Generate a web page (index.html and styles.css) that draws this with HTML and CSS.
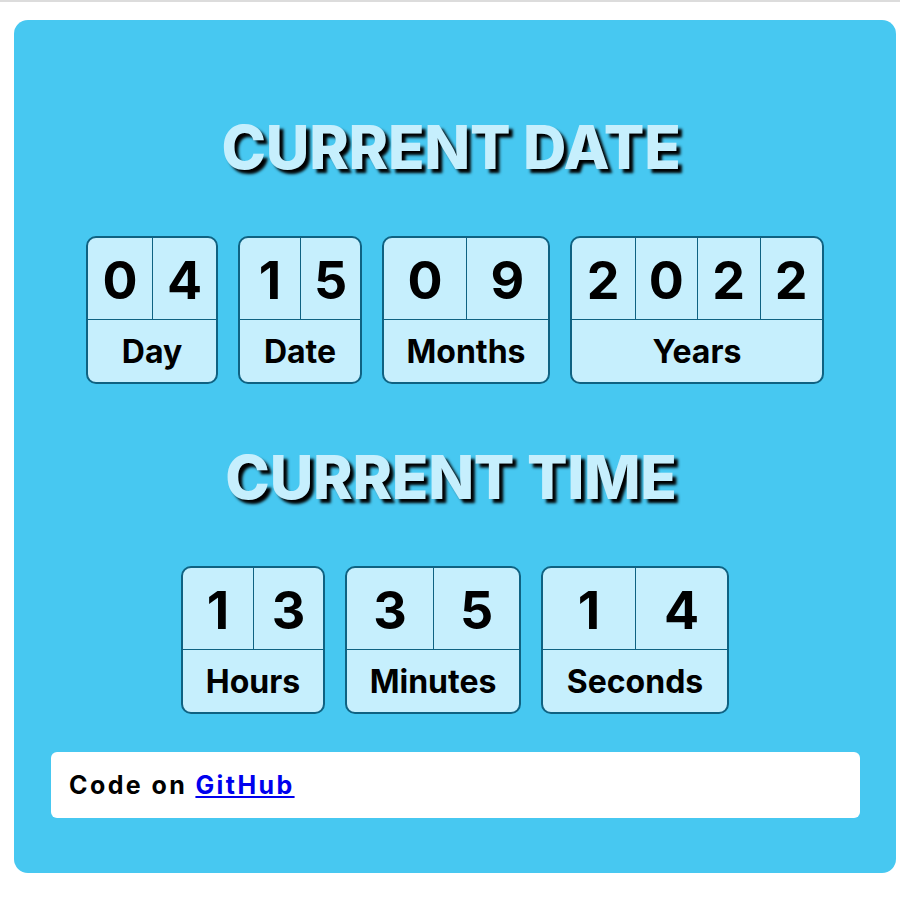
FILE: index.html
```html
<!DOCTYPE html>
<html lang="en">
<head>
<meta charset="utf-8">
<title>Current Date and Time</title>
<link rel="stylesheet" href="styles.css">
</head>
<body>
<div class="topline"></div>
<main class="card">
  <h1 class="title title-date">CURRENT DATE</h1>
  <div class="row">
    <div class="box w-day">
      <div class="digits"><span class="d">0</span><span class="d">4</span></div>
      <div class="label">Day</div>
    </div>
    <div class="box w-date">
      <div class="digits"><span class="d">1</span><span class="d">5</span></div>
      <div class="label">Date</div>
    </div>
    <div class="box w-months">
      <div class="digits"><span class="d">0</span><span class="d">9</span></div>
      <div class="label">Months</div>
    </div>
    <div class="box w-years">
      <div class="digits four"><span class="d">2</span><span class="d">0</span><span class="d">2</span><span class="d">2</span></div>
      <div class="label">Years</div>
    </div>
  </div>
  <h1 class="title title-time">CURRENT TIME</h1>
  <div class="row">
    <div class="box w-hours">
      <div class="digits"><span class="d">1</span><span class="d">3</span></div>
      <div class="label">Hours</div>
    </div>
    <div class="box w-minutes">
      <div class="digits"><span class="d">3</span><span class="d">5</span></div>
      <div class="label">Minutes</div>
    </div>
    <div class="box w-seconds">
      <div class="digits"><span class="d">1</span><span class="d">4</span></div>
      <div class="label">Seconds</div>
    </div>
  </div>
  <footer class="footer">Code on <a href="#">GitHub</a></footer>
</main>
</body>
</html>
```
FILE: styles.css
```css
html, body {
  margin: 0;
  padding: 0;
  background: #ffffff;
}
body {
  font-family: Inter, "Noto Sans", "DejaVu Sans", sans-serif;
}
.topline {
  height: 2px;
  background: #dcdcdc;
}
.card {
  margin: 18px 4px 0 14px;
  height: 853px;
  box-sizing: border-box;
  background: #47c8f1;
  border-radius: 14px;
  display: flex;
  flex-direction: column;
  align-items: center;
  padding-top: 91px;
}
.title {
  margin: 0;
  font-size: 60px;
  line-height: 72px;
  font-weight: 800;
  color: #c6effd;
  text-shadow: 4px 4px 3px #000;
  letter-spacing: -0.3px;
  transform: translateX(-4px);
}
.title-time {
  margin-top: 57px;
}
.row {
  display: flex;
  gap: 20px;
  margin-top: 53px;
}
.box {
  box-sizing: border-box;
  height: 148px;
  border: 2px solid #0f6282;
  border-radius: 10px;
  background: #c6effd;
  display: flex;
  flex-direction: column;
  overflow: hidden;
}
.digits {
  height: 81px;
  display: grid;
  grid-template-columns: 1fr 1fr;
}
.digits.four {
  grid-template-columns: 1fr 1fr 1fr 1fr;
}
.d {
  display: flex;
  align-items: center;
  justify-content: center;
  font-size: 52px;
  font-weight: 700;
  color: #000;
  padding-top: 3px;
}
.d + .d {
  border-left: 1px solid #0f6282;
}
.label {
  flex: 1;
  border-top: 1px solid #0f6282;
  display: flex;
  align-items: center;
  justify-content: center;
  font-size: 32px;
  font-weight: 700;
  color: #000;
}
.w-day { width: 132px; }
.w-date { width: 124px; }
.w-months { width: 168px; }
.w-years { width: 254px; }
.w-hours { width: 144px; }
.w-minutes { width: 176px; }
.w-seconds { width: 188px; }
.footer {
  margin-top: 38px;
  align-self: flex-start;
  margin-left: 37px;
  width: 809px;
  height: 66px;
  box-sizing: border-box;
  background: #ffffff;
  border-radius: 6px;
  padding-left: 18px;
  display: flex;
  align-items: center;
  font-size: 25px;
  font-weight: 700;
  letter-spacing: 2.4px;
  color: #000;
  white-space: pre;
}
.footer a {
  color: #0000ee;
  text-decoration: underline;
}
```
